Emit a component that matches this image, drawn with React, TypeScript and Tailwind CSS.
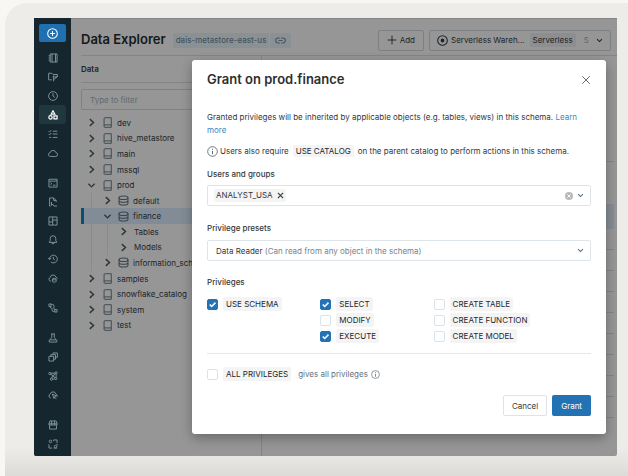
import { useState } from "react";
import type { ReactNode } from "react";

type IconProps = { children: ReactNode; className?: string };

function Icon({ children, className = "size-[10px]" }: IconProps) {
  return (
    <svg
      viewBox="0 0 16 16"
      className={`${className} shrink-0`}
      fill="none"
      stroke="currentColor"
      strokeWidth="1.5"
      aria-hidden="true"
    >
      {children}
    </svg>
  );
}

const ChevronDown = ({ className }: { className?: string }) => (
  <Icon className={className}>
    <path d="M2.500 5l5.500 5.500L13.500 5" strokeWidth="2.4" />
  </Icon>
);

const ChevronRight = ({ className }: { className?: string }) => (
  <Icon className={className}>
    <path d="M5 2l6.500 6L5 14" strokeWidth="2.6" />
  </Icon>
);

const Info = ({ className }: { className?: string }) => (
  <Icon className={className}>
    <circle cx="8" cy="8" r="7" strokeWidth="1.3" />
    <path d="M8 7v5M8 4v1.6" strokeWidth="1.4" />
  </Icon>
);

const Book = () => (
  <Icon className="size-[11px]">
    <path d="M3 14V2.500A1.500 1.500 0 0 1 4.500 1H13.500v14H4a1 1 0 0 1-1-1zM3 11.500h10.500" strokeWidth="1.300" />
  </Icon>
);

const Database = () => (
  <Icon className="size-[11px]">
    <ellipse cx="8" cy="4" rx="6.500" ry="2.700" />
    <path d="M1.500 4v8c0 1.600 2.900 2.700 6.500 2.700s6.500-1.100 6.500-2.700V4M1.500 8c0 1.600 2.900 2.700 6.500 2.700s6.500-1.100 6.500-2.700" />
  </Icon>
);

type NavItem = { name: string; art: ReactNode; active?: boolean };

const browse: NavItem[] = [
  {
    name: "Notebook",
    art: <path d="M3.500 1.500h11v13h-11zM6.500 1.500v13M1 4.500h3M1 8h3M1 11.500h3M12 1.500v13" />,
  },
  {
    name: "Repos",
    art: (
      <>
        <path d="M6 12.500H1V2h5l2 2h7v4" />
        <path d="M9 7v8M13 7.500v1.500l-4 3" />
        <circle cx="9" cy="7.500" r="1" />
        <circle cx="13" cy="8" r="1" />
      </>
    ),
  },
  {
    name: "Recents",
    art: (
      <>
        <circle cx="8" cy="8" r="7" />
        <path d="M8 3.500V8l3 2.500" />
      </>
    ),
  },
  {
    name: "Data",
    active: true,
    art: (
      <>
        <path d="M8 1.200l3 5.300H5z" strokeWidth="1.900" />
        <circle cx="4" cy="11.800" r="2.700" strokeWidth="1.900" />
        <path d="M9.500 9.300h5v5h-5z" strokeWidth="1.900" />
      </>
    ),
  },
  {
    name: "Workflows",
    art: <path d="M1 3.500l1.500 1.500L5 2M1 8l1.500 1.500L5 6.500M2 13.500h3M7.500 3.500H15M7.500 8H15M7.500 13.500H15" />,
  },
  {
    name: "Compute",
    art: <path d="M4 13.500a3 3 0 0 1-.500-6 4.700 4.700 0 0 1 9.200 0 3 3 0 0 1-.700 6z" />,
  },
];

const sql: NavItem[] = [
  { name: "SQL Editor", art: <path d="M1.500 2h13v12.500h-13zM1.500 5h13M4 7.500l2 1.700-2 1.700M8 11.500h4" /> },
  {
    name: "Queries",
    art: <path d="M4 14.500H2.500v-13H9l4 4V8M9 1.500v4h4M5.500 8v5.500l2-2 2 3h5" />,
  },
  { name: "Dashboards", art: <path d="M1.500 1.500h13v13h-13zM7.500 1.500v13M1.500 9.500h6M7.500 6.500h7" /> },
  {
    name: "Alerts",
    art: <path d="M8 1.200a4.500 4.500 0 0 0-4.500 4.500V9L2 11.800h12L12.500 9V5.700A4.500 4.500 0 0 0 8 1.200zM6 12.200a2 2 0 0 0 4 0" />,
  },
  {
    name: "Query History",
    art: <path d="M2.500 8a6.200 6.200 0 1 1 2 4.600M0 6.500l2.500 2.500L5 6.500M8.500 4.500V8l2.500 1.500" />,
  },
  {
    name: "SQL Warehouses",
    art: (
      <>
        <path d="M5 13H4a3 3 0 0 1-.500-5.800 4.700 4.700 0 0 1 9.200-.500A3 3 0 0 1 15 9" />
        <ellipse cx="10" cy="9.800" rx="3" ry="1.300" />
        <path d="M7 9.800v3.500c0 2 6 2 6 0V9.800" />
      </>
    ),
  },
];

const pipelines: NavItem[] = [
  {
    name: "Delta Live Tables",
    art: <path d="M1.500 1.500H5v4H1.500zM5 2h1.500a3 3 0 0 1 3 3v4.500a1.500 1.500 0 0 0 1.500 1.500M3.500 5.500v1A1.500 1.500 0 0 0 5 8a1.500 1.500 0 0 1 1.500 1.500V11a3 3 0 0 0 3 3H11M11 10.500h3.500v4H11z" />,
  },
];

const ml: NavItem[] = [
  { name: "Experiments", art: <path d="M5 1.500h6M6 1.500V7l-3 4h10l-3-4V1.500M2 11v3.500h12V11" /> },
  { name: "Feature Store", art: <path d="M1.500 7h7.500v7.500H1.500zM4.500 7V4.200H12V11.500H9M8 4V1.500h7v7h-3" /> },
  {
    name: "Models",
    art: (
      <>
        <circle cx="3" cy="4" r="1.800" />
        <circle cx="13" cy="3" r="1.800" />
        <circle cx="5.500" cy="13" r="1.800" />
        <circle cx="12.500" cy="12" r="1.800" />
        <circle cx="8" cy="8" r="1.500" />
        <path d="M4.500 5l2.500 2M11.500 4L9 7M6 11.500L7.500 9M9 9l2.500 2M4.500 3.500h6.700M7.500 13h3.200M13 5v5" />
      </>
    ),
  },
  {
    name: "Serving",
    art: <path d="M4.500 12.500H4a3 3 0 0 1-.500-5.800 4.700 4.700 0 0 1 9.200 0 3 3 0 0 1 1.800 4M7 6.500l6.500 3-3 1-1 3zM10 11l3.500 3.500" />,
  },
];

const partners: NavItem[] = [
  { name: "Marketplace", art: <path d="M3 1.500h10l1.500 4.500v2h-13V6zM1.500 6h13M2.500 8v6.500h11V8M5.700 1.500V8M10.300 1.500V8" /> },
  {
    name: "Partner Connect",
    art: (
      <>
        <circle cx="4" cy="3.800" r="2" />
        <circle cx="12" cy="12.200" r="2" />
        <path d="M9.500 1.500h5v5M1.500 9.500v5h5M8 2.500l2-1M1 8.500l1 1M14.500 8v2.500M9 14.500h5.500" />
      </>
    ),
  },
];

function NavGroup({ items }: { items: NavItem[] }) {
  return (
    <ul>
      {items.map((item) => (
        <li key={item.name}>
          <a
            href="#"
            aria-label={item.name}
            className={
              item.active
                ? "flex h-[19px] items-center justify-center rounded-[3px] bg-[#1f373d] text-white"
                : "flex h-[19px] items-center justify-center text-[#8295a0]"
            }
          >
            <Icon>{item.art}</Icon>
          </a>
        </li>
      ))}
    </ul>
  );
}

type TreeRow = { name: string; depth: 0 | 1 | 2; open?: boolean; selected?: boolean };

const tree: TreeRow[] = [
  { name: "dev", depth: 0 },
  { name: "hive_metastore", depth: 0 },
  { name: "main", depth: 0 },
  { name: "mssql", depth: 0 },
  { name: "prod", depth: 0, open: true },
  { name: "default", depth: 1 },
  { name: "finance", depth: 1, open: true, selected: true },
  { name: "Tables", depth: 2 },
  { name: "Models", depth: 2 },
  { name: "information_schema", depth: 1 },
  { name: "samples", depth: 0 },
  { name: "snowflake_catalog", depth: 0 },
  { name: "system", depth: 0 },
  { name: "test", depth: 0 },
];

const Guide = () => <span className="ml-[4px] w-[12px] shrink-0 self-stretch border-l border-[#858b90]" />;

function Tree() {
  return (
    <ul className="mt-[5px] flex h-[218px] flex-col text-[8px] text-[#1d2428]">
      {tree.map((row) => (
        <li
          key={row.name}
          className={
            row.selected
              ? "flex flex-1 items-center border-l-3 border-[#134a70] bg-[#828c96] pl-[3px]"
              : "flex flex-1 items-center pl-[6px]"
          }
        >
          {row.depth > 0 && <Guide />}
          {row.depth > 1 && <Guide />}
          {row.open ? (
            <ChevronDown className="size-[9px] text-[#2a363d]" />
          ) : (
            <ChevronRight className="size-[9px] text-[#2a363d]" />
          )}
          {row.depth < 2 && (
            <span className="ml-[6px] text-[#37434a]">{row.depth === 0 ? <Book /> : <Database />}</span>
          )}
          <span className={row.depth < 2 ? "ml-[4px]" : "ml-[6px]"}>{row.name}</span>
        </li>
      ))}
    </ul>
  );
}

function Code({ children }: { children: ReactNode }) {
  return <span className="rounded-[2px] bg-[#f4f4f5] px-[3px] py-[1px] text-[#24282b]">{children}</span>;
}

function Privilege({ name, on = false }: { name: string; on?: boolean }) {
  const [checked, setChecked] = useState(on);
  return (
    <label className="flex h-4 items-center gap-[5px]">
      <span className="grid size-[11px] place-items-center">
        <input
          type="checkbox"
          checked={checked}
          onChange={(e) => setChecked(e.target.checked)}
          className="col-start-1 row-start-1 size-[11px] appearance-none rounded-[2px] border border-[#d8e3ea] bg-white checked:border-[#2272b4] checked:bg-[#2272b4]"
        />
        {checked && (
          <svg viewBox="0 0 10 10" className="pointer-events-none col-start-1 row-start-1 size-[11px]" fill="none" stroke="white" strokeWidth="1.4" aria-hidden="true">
            <path d="M2.500 5l1.800 1.800 3.400-3.500" />
          </svg>
        )}
      </span>
      <Code>{name}</Code>
    </label>
  );
}

function GrantDialog() {
  return (
    <div
      role="dialog"
      aria-labelledby="grant-title"
      className="absolute top-[42px] right-[11px] left-[158px] rounded-[3px] bg-white px-[15px] pt-[10px] pb-[18px] text-[8px] text-[#33383c] shadow-[0_4px_12px_rgba(0,0,0,0.3)]"
    >
      <div className="flex h-[20px] items-center justify-between">
        <h2 id="grant-title" className="text-[13px] font-semibold text-[#2c2f31]">Grant on prod.finance</h2>
        <button type="button" aria-label="Close" className="text-[#5a6b77]">
          <Icon>
            <path d="M2 2l12 12M14 2L2 14" />
          </Icon>
        </button>
      </div>
      <p className="mt-[21px] leading-[13px]">
        Granted privileges will be inherited by applicable objects (e.g. tables, views) in this schema.{" "}
        <a href="#" className="text-[#3f86bd]">Learn more</a>
      </p>
      <p className="mt-[6px] flex h-[16px] items-center whitespace-nowrap">
        <Info className="mr-[2px] size-[11px] text-[#5a6b77]" />
        <span>Users also require</span>
        <span className="mx-[4px]"><Code>USE CATALOG</Code></span>
        <span>on the parent catalog to perform actions in this schema.</span>
      </p>

      <label htmlFor="users" className="mt-[9px] block leading-[13px] font-medium">Users and groups</label>
      <div className="mt-[4px] flex h-[21px] items-center rounded-[2px] border border-[#dde5ea] px-[6px]">
        <span className="flex items-center gap-[4px] rounded-[2px] bg-[#f4f4f5] px-[2px] leading-[13px]">
          ANALYST_USA
          <button type="button" aria-label="Remove ANALYST_USA">
            <Icon className="size-[7px]">
              <path d="M2 2l12 12M14 2L2 14" strokeWidth="2.500" />
            </Icon>
          </button>
        </span>
        <input id="users" className="min-w-0 flex-1 outline-none" />
        <button type="button" aria-label="Clear all">
          <svg viewBox="0 0 16 16" className="size-[8px]" aria-hidden="true">
            <circle cx="8" cy="8" r="8" fill="#b9b9b9" />
            <path d="M5 5l6 6M11 5l-6 6" stroke="white" strokeWidth="1.800" />
          </svg>
        </button>
        <ChevronDown className="ml-[4px] size-[7px] text-[#5a6b77]" />
      </div>

      <label htmlFor="preset" className="mt-[16px] block leading-[13px] font-medium">Privilege presets</label>
      <div className="relative mt-[5px] flex h-[21px] items-center rounded-[2px] border border-[#dde5ea] pr-[6px] pl-[8px]">
        <span className="flex-1">
          Data Reader <span className="text-[#75838d]">(Can read from any object in the schema)</span>
        </span>
        <ChevronDown className="size-[7px] text-[#5a6b77]" />
        <select id="preset" className="absolute inset-0 opacity-0">
          <option>Data Reader</option>
        </select>
      </div>

      <fieldset className="mt-[15px]">
        <legend className="leading-[13px] font-medium">Privileges</legend>
        <div className="mt-[7px] grid grid-cols-[113fr_113fr_157fr]">
          <div><Privilege name="USE SCHEMA" on /></div>
          <div>
            <Privilege name="SELECT" on />
            <Privilege name="MODIFY" />
            <Privilege name="EXECUTE" on />
          </div>
          <div>
            <Privilege name="CREATE TABLE" />
            <Privilege name="CREATE FUNCTION" />
            <Privilege name="CREATE MODEL" />
          </div>
        </div>
        <div className="mt-[9px] flex items-center border-t border-[#e4e8eb] pt-[12px]">
          <Privilege name="ALL PRIVILEGES" />
          <span className="mr-[3px] ml-[7px] text-[#64727d]">gives all privileges</span>
          <Info className="size-[9px] text-[#64727d]" />
        </div>
      </fieldset>

      <div className="mt-[13px] flex justify-end gap-[5px]">
        <button type="button" className="h-[21px] rounded-[2px] border border-[#dde3e8] px-[8px]">Cancel</button>
        <button type="button" className="h-[21px] rounded-[2px] bg-[#2272b4] px-[9px] text-white">Grant</button>
      </div>
    </div>
  );
}

const gridRows = [0, 1, 2, 3, 4, 5, 6, 7];

export default function App() {
  return (
    <div className="min-h-screen bg-[#f8f7f3] pt-[3px] pl-[5px] font-[Inter,sans-serif]">
      <div className="min-h-[473px] rounded-tl-[22px] bg-[linear-gradient(to_bottom,#edece8_94%,#dcdbd7_100%)] pt-[15px] pr-[11px] pl-[29px]">
        <div className="relative flex overflow-hidden rounded-b-[2px] bg-[#969696]">
          <nav aria-label="Main" className="flex w-[37px] shrink-0 flex-col gap-[11px] bg-[#15262f] px-[5px] pt-[6px] pb-[3px]">
            <div>
              <button type="button" aria-label="New" className="mb-[6px] flex h-[18px] w-full items-center justify-center rounded-[2px] bg-[#2070b1] text-white">
                <Icon className="size-[11px]">
                  <circle cx="8" cy="8" r="7" />
                  <path d="M8 4.500v7M4.500 8h7" />
                </Icon>
              </button>
              <NavGroup items={browse} />
            </div>
            <NavGroup items={sql} />
            <NavGroup items={pipelines} />
            <NavGroup items={ml} />
            <NavGroup items={partners} />
          </nav>

          <main className="flex min-w-0 flex-1 flex-col border-t border-[#858585] pl-[10px]">
            <header className="flex h-[37px] shrink-0 items-center border-b border-[#828486] pt-[6px] pr-[6px] text-[8px] whitespace-nowrap text-[#1d2428]">
              <h1 className="text-[13px] font-semibold text-[#15191b]">Data Explorer</h1>
              <span className="ml-[7px] flex h-[15px] items-center rounded-[2px] bg-[#8a9195] font-medium text-[#46535c]">
                <span className="px-[3px]">dais-metastore-east-us</span>
                <button type="button" aria-label="Copy link" className="flex h-full items-center border-l border-[#969696] px-[5px]">
                  <Icon className="size-[11px]">
                    <path d="M7 11.500H4.500a3.500 3.500 0 0 1 0-7H7M9 4.500h2.500a3.500 3.500 0 0 1 0 7H9M5 8h6" />
                  </Icon>
                </button>
              </span>
              <button type="button" className="ml-auto flex h-[21px] items-center gap-[3px] rounded-[2px] border border-[#7c8082] px-[8px]">
                <Icon>
                  <path d="M8 1v14M1 8h14" />
                </Icon>
                Add
              </button>
              <button type="button" className="ml-[5px] flex h-[21px] w-[182px] items-center rounded-[2px] border border-[#7c8082] px-[7px]">
                <Icon className="size-[11px]">
                  <circle cx="8" cy="8" r="7" />
                  <circle cx="8" cy="8" r="2" fill="currentColor" />
                </Icon>
                <span className="ml-[3px]">Serverless Wareh...</span>
                <span className="ml-[5px] rounded-[2px] bg-[#8d8e8f] px-[3px] py-[1px]">Serverless</span>
                <span className="ml-[8px] text-[#5d676d]">S</span>
                <ChevronDown className="ml-auto size-[7px]" />
              </button>
            </header>

            <div className="flex flex-1">
              <section className="flex w-[181px] shrink-0 flex-col border-r border-[#828486]">
                <h2 className="flex h-[27px] items-center border-b border-[#828486] text-[8px] font-semibold text-[#1d2428]">Data</h2>
                <input
                  aria-label="Type to filter"
                  placeholder="Type to filter"
                  className="mt-[6px] mr-[8px] h-[21px] rounded-[2px] border border-[#75848f] px-[8px] text-[8px] placeholder:text-[#626a6f]"
                />
                <Tree />
              </section>
              <section className="flex-1 pt-[105px] pr-[3px]">
                <div className="h-[43px] border-t border-[#828486]" />
                <div className="h-[25px] bg-[#858c95]" />
                <div className="h-[20px]" />
                {gridRows.map((n) => (
                  <div key={n} className="h-[21px] border-t border-[#828486]" />
                ))}
                <div className="border-t border-[#828486]" />
              </section>
            </div>
          </main>

          <GrantDialog />
        </div>
      </div>
    </div>
  );
}
